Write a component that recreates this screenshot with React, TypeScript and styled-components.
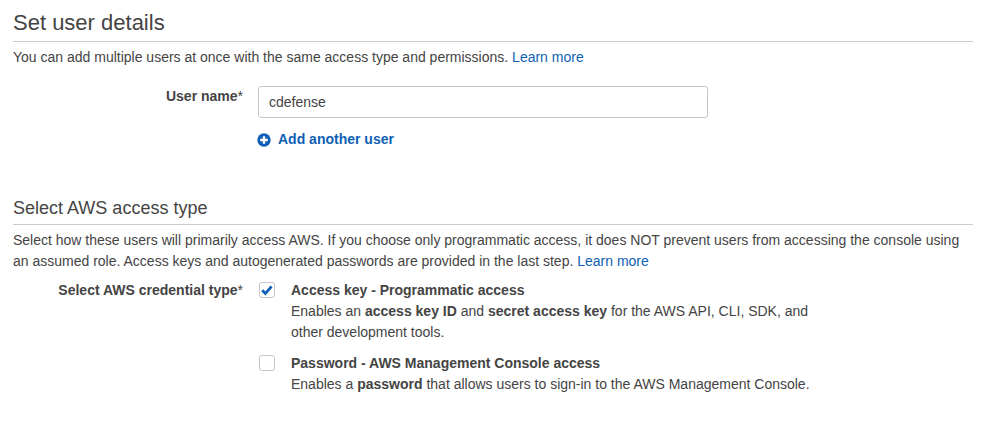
import React from "react";
import styled, { createGlobalStyle } from "styled-components";

const Global = createGlobalStyle`
  html, body { margin: 0; padding: 0; background: #fff; }
  body { font-family: "Liberation Sans", Arial, sans-serif; font-size: 14px; color: #444; }
`;
const Page = styled.div`
  width: 960px;
  padding: 10px 0 0 13px;
`;
const Section = styled.section<{ $gap?: number }>`
  margin-top: ${(p) => p.$gap ?? 0}px;
`;
const Title = styled.h2<{ $size: number }>`
  margin: 0;
  font-size: ${(p) => p.$size}px;
  font-weight: 400;
  line-height: ${(p) => p.$size + 4}px;
  color: #444;
  padding-bottom: 5px;
  border-bottom: 1px solid #ccc;
`;
const Intro = styled.p`
  margin: 5px 0 0;
  line-height: 21px;
`;
const Link = styled.a`
  color: #0e5fb5;
  text-decoration: none;
`;
const Row = styled.div<{ $top: number }>`
  display: grid;
  grid-template-columns: 230px 450px;
  column-gap: 15px;
  margin-top: ${(p) => p.$top}px;
`;
const Label = styled.div`
  text-align: right;
  font-weight: 700;
  line-height: 21px;
`;
const Star = styled.span`
  font-weight: 400;
`;
const Input = styled.div`
  box-sizing: border-box;
  height: 32px;
  border: 1px solid #c6c6c6;
  border-radius: 3px;
  padding: 0 10px;
  line-height: 30px;
`;
const AddUser = styled(Link)`
  display: flex;
  align-items: center;
  gap: 7px;
  margin-top: 11px;
  font-weight: 700;
  line-height: 21px;
`;
const PlusIcon = styled.svg`
  margin-left: -1px;
`;
const Options = styled.div`
  display: flex;
  flex-direction: column;
  gap: 10px;
`;
const Option = styled.div`
  display: grid;
  grid-template-columns: 16px 1fr;
  column-gap: 16px;
  width: 600px;
  padding-left: 1px;
`;
const Box = styled.span`
  box-sizing: border-box;
  display: flex;
  align-items: center;
  justify-content: center;
  width: 16px;
  height: 16px;
  margin-top: 2px;
  border: 1px solid #c6c6c6;
  border-radius: 3px;
`;
const OptionText = styled.div`
  line-height: 21px;
`;
const OptionTitle = styled.div`
  font-weight: 700;
`;

export default function App() {
  return (
    <Page>
      <Global />
      <Section>
        <Title $size={22}>Set user details</Title>
        <Intro>
          You can add multiple users at once with the same access type and permissions. <Link href="#">Learn more</Link>
        </Intro>
        <Row $top={18}>
          <Label>User name<Star>*</Star></Label>
          <div>
            <Input>cdefense</Input>
            <AddUser href="#">
              <PlusIcon width="14" height="14" viewBox="0 0 14 14" aria-hidden="true">
                <circle cx="7" cy="7" r="6.7" fill="#0e5fb5" />
                <path d="M7 3.2v7.6M3.2 7h7.6" stroke="#fff" strokeWidth="2.4" />
              </PlusIcon>
              Add another user
            </AddUser>
          </div>
        </Row>
      </Section>
      <Section $gap={47}>
        <Title $size={18}>Select AWS access type</Title>
        <Intro>
          Select how these users will primarily access AWS. If you choose only programmatic access, it does NOT prevent users from accessing the console using an assumed role. Access keys and autogenerated passwords are provided in the last step. <Link href="#">Learn more</Link>
        </Intro>
        <Row $top={8}>
          <Label>Select AWS credential type<Star>*</Star></Label>
          <Options>
            <Option>
              <Box>
                <svg width="12" height="12" viewBox="0 0 12 12" aria-hidden="true">
                  <path d="M1.2 6.3L4.4 9.5L10.6 2.4" fill="none" stroke="#0e5fb5" strokeWidth="2.8" />
                </svg>
              </Box>
              <OptionText>
                <OptionTitle>Access key - Programmatic access</OptionTitle>
                Enables an <b>access key ID</b> and <b>secret access key</b> for the AWS API, CLI, SDK, and<br />other development tools.
              </OptionText>
            </Option>
            <Option>
              <Box />
              <OptionText>
                <OptionTitle>Password - AWS Management Console access</OptionTitle>
                Enables a <b>password</b> that allows users to sign-in to the AWS Management Console.
              </OptionText>
            </Option>
          </Options>
        </Row>
      </Section>
    </Page>
  );
}
